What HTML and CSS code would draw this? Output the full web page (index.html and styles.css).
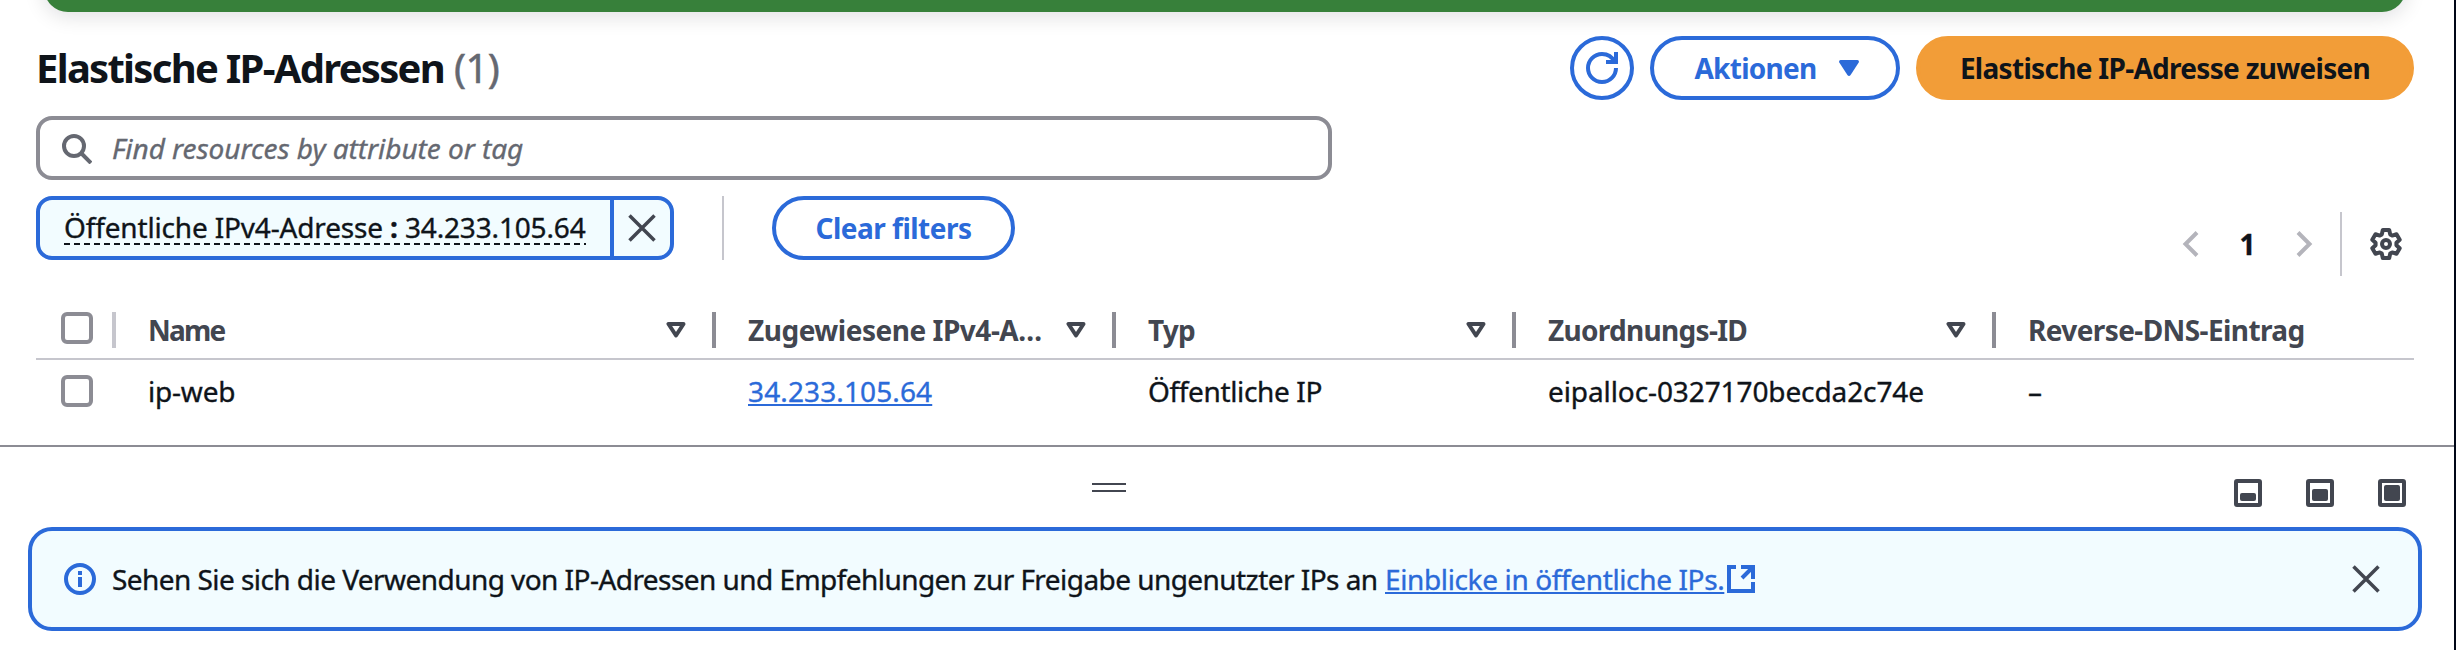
FILE: index.html
```html
<!DOCTYPE html>
<html lang="de">
<head>
<meta charset="utf-8">
<title>Elastische IP-Adressen</title>
<link rel="stylesheet" href="styles.css">
</head>
<body>
<main class="page">
  <div class="flash"></div>

  <header class="header">
    <h1 class="title"><span class="title-text">Elastische IP-Adressen</span><span class="counter">(1)</span></h1>
    <div class="actions">
      <button class="btn btn-icon" aria-label="Aktualisieren">
        <svg class="icon" viewBox="0 0 32 32"><path d="M30 16c0 7.74-6.26 14-14 14S2 23.74 2 16 8.26 2 16 2c5.58 0 10.4 3.26 12.66 8M20 10h10V0"/></svg>
      </button>
      <button class="btn btn-menu"><span class="t-actions">Aktionen</span>
        <svg class="caret" viewBox="0 0 20 16"><path class="solid" d="M1.5 0h17q2 .6 1.2 2.6L11.600 15q-1.600 1.800-3.200 0L.3 2.600Q-.5.6 1.500 0z"/></svg>
      </button>
      <button class="btn btn-primary"><span class="t-primary">Elastische IP-Adresse zuweisen</span></button>
    </div>
  </header>

  <div class="search">
    <svg class="icon" viewBox="0 0 32 32"><circle cx="14" cy="14" r="10"/><path d="M21 21l10 10"/></svg>
    <span class="t-search">Find resources by attribute or tag</span>
  </div>

  <section class="toolbar">
    <div class="filters">
      <div class="token">
        <div class="token-label"><span class="token-text">Öffentliche IPv4-Adresse <b>:</b> 34.233.105.64</span></div>
        <div class="token-close"><svg class="icon" viewBox="0 0 32 32"><path class="cross" d="M3.500 3.500l25 25M28.500 3.500l-25 25"/></svg></div>
      </div>
      <i class="rule"></i>
      <button class="btn btn-clear"><span class="t-clear">Clear filters</span></button>
    </div>
    <div class="pagination">
      <svg class="icon light" viewBox="0 0 32 32"><path d="M22 4.500L10.500 16 22 27.500"/></svg>
      <span class="page-no">1</span>
      <svg class="icon light" viewBox="0 0 32 32"><path d="M10 4.500L21.500 16 10 27.500"/></svg>
      <i class="rule"></i>
      <svg class="icon gear" viewBox="-16 -16 32 32"><path d="M3.200-14L4.200-9.600 6.210-8.440 10.520-9.770 13.720-4.230 10.410-1.160V1.160L13.720 4.230 10.520 9.770 6.210 8.440 4.200 9.600 3.200 14H-3.200L-4.200 9.600-6.210 8.440-10.520 9.770-13.720 4.230-10.410 1.160V-1.160L-13.720-4.230-10.520-9.770-6.210-8.440-4.200-9.600-3.200-14z"/><circle r="4"/></svg>
    </div>
  </section>

  <section class="table">
    <div class="row head">
      <div class="cell select"><i class="checkbox"></i></div>
      <div class="cell"><span class="t-name">Name</span><svg class="sort" viewBox="0 0 20 16"><path d="M2.500 2h15L10 13.500z"/></svg></div>
      <div class="cell"><span class="t-assigned">Zugewiesene IPv4-A…</span><svg class="sort" viewBox="0 0 20 16"><path d="M2.500 2h15L10 13.500z"/></svg></div>
      <div class="cell"><span class="t-type">Typ</span><svg class="sort" viewBox="0 0 20 16"><path d="M2.500 2h15L10 13.500z"/></svg></div>
      <div class="cell"><span class="t-id">Zuordnungs-ID</span><svg class="sort" viewBox="0 0 20 16"><path d="M2.500 2h15L10 13.500z"/></svg></div>
      <div class="cell"><span class="t-dns">Reverse-DNS-Eintrag</span></div>
    </div>
    <div class="row">
      <div class="cell select"><i class="checkbox"></i></div>
      <div class="cell"><span class="v-name">ip-web</span></div>
      <div class="cell"><a class="link v-ip">34.233.105.64</a></div>
      <div class="cell"><span class="v-type">Öffentliche IP</span></div>
      <div class="cell"><span class="v-id">eipalloc-0327170becda2c74e</span></div>
      <div class="cell"><span>–</span></div>
    </div>
  </section>

  <section class="panel">
    <div class="panel-bar">
      <div class="handle"></div>
      <div class="panel-sizes">
        <svg class="size" viewBox="0 0 28 28"><rect x="2" y="2" width="24" height="24" rx="1"/><rect class="solid" x="6" y="14" width="16" height="8" rx="2"/></svg>
        <svg class="size" viewBox="0 0 28 28"><rect x="2" y="2" width="24" height="24" rx="1"/><rect class="solid" x="6" y="10" width="16" height="12" rx="2"/></svg>
        <svg class="size" viewBox="0 0 28 28"><rect x="2" y="2" width="24" height="24" rx="1"/><rect class="solid" x="6" y="6" width="16" height="16" rx="2"/></svg>
      </div>
    </div>
    <div class="alert">
      <svg class="icon info" viewBox="0 0 32 32"><circle cx="16" cy="16" r="14"/><path d="M16 8v4M16 14v10"/></svg>
      <span class="alert-text">Sehen Sie sich die Verwendung von IP-Adressen und Empfehlungen zur Freigabe ungenutzter IPs an</span>
      <a class="link alert-link">Einblicke in öffentliche IPs.</a>
      <svg class="icon external" viewBox="0 0 32 32"><path d="M11 4H4v24h24v-9M16 4h12v12M17 15L28 4"/></svg>
      <svg class="icon dismiss" viewBox="0 0 32 32"><path class="cross" d="M3.500 3.500l25 25M28.500 3.500l-25 25"/></svg>
    </div>
  </section>
</main>
</body>
</html>
```
FILE: styles.css
```css
* { box-sizing: border-box; }
body {
  margin: 0;
  background: #fff;
  color: #0f141a;
  font: 400 28px/40px "Noto Sans", "Open Sans", sans-serif;
  -webkit-text-stroke: .35px currentColor;
}
.page {
  height: 650px;
  overflow: hidden;
  border-right: 2px solid #000716;
}
svg { display: block; flex: none; fill: none; stroke: currentColor; stroke-width: 4; }
.icon { width: 32px; height: 32px; }
.solid { fill: currentColor; stroke: none; }
.cross { stroke-width: 3.5; }

.flash {
  height: 60px;
  margin: -48px 48px 0 44px;
  border-radius: 24px;
  background: #37803a;
  box-shadow: 0 4px 20px 1px rgba(0, 7, 22, .12);
}

.header {
  display: flex;
  align-items: center;
  justify-content: space-between;
  height: 64px;
  margin: 24px 40px 0 36px;
}
.title { display: flex; margin: 0; font-size: 40px; line-height: 48px; font-weight: 700; -webkit-text-stroke-width: 0; }
.title-text { width: 418px; letter-spacing: -1.72px; white-space: nowrap; }
.counter { font-weight: 400; letter-spacing: -.6px; color: #656871; -webkit-text-stroke: .5px currentColor; }
.actions { display: flex; gap: 16px; }

.btn {
  display: flex;
  align-items: center;
  justify-content: center;
  height: 64px;
  padding: 0 0 1px;
  border: 4px solid #2b6ad9;
  border-radius: 32px;
  background: #fff;
  color: #2b6ad9;
  font: 700 28px/40px "Noto Sans", "Open Sans", sans-serif;
  -webkit-text-stroke-width: 0;
}
.btn-icon { width: 64px; padding: 0; }
.btn-menu { width: 250px; gap: 22px; padding-left: 3px; }
.caret { width: 20px; height: 16px; }
.btn-primary { width: 498px; border-color: #f29d38; background: #f29d38; color: #0f141a; }
.btn-clear { width: 243px; }
.t-actions { letter-spacing: -.72px; }
.t-primary { letter-spacing: -.7px; }
.t-clear { letter-spacing: -.5px; }

.search {
  display: flex;
  align-items: center;
  gap: 20px;
  width: 1296px;
  height: 64px;
  margin: 16px 0 0 36px;
  padding-left: 20px;
  border: 4px solid #8c8c94;
  border-radius: 16px;
  color: #656871;
  font-style: italic;
}
.t-search { letter-spacing: -.05px; }

.toolbar {
  display: flex;
  justify-content: space-between;
  height: 80px;
  margin: 16px 52px 0 36px;
}
.filters { display: flex; height: 64px; }
.rule { width: 2px; height: 64px; background: #c6c6cd; }
.token {
  display: flex;
  width: 638px;
  margin-right: 48px;
  border: 4px solid #2b6ad9;
  border-radius: 16px;
  background: #f2fcff;
}
.token-label { display: flex; align-items: center; width: 574px; padding-left: 24px; border-right: 4px solid #2b6ad9; }
.token-text { height: 36px; line-height: 36px; margin-top: -2px; position: relative; letter-spacing: -.16px; white-space: nowrap; }
.token-text::after {
  content: "";
  position: absolute;
  left: 0;
  right: 0;
  bottom: 0;
  height: 2px;
  background: repeating-linear-gradient(90deg, #0f141a 0 6px, transparent 6px 10px);
}
.token-close { display: flex; flex: 1; align-items: center; justify-content: center; color: #424650; }
.filters .rule { margin-right: 48px; }
.pagination { display: flex; align-items: center; height: 64px; margin-top: 16px; }
.light { color: #b4b4bb; }
.page-no { width: 81px; text-align: center; font-weight: 700; }
.pagination .rule { margin: 0 28px 0 20px; }
.gear { color: #424650; stroke-linejoin: round; }

.table { margin: 24px 40px 0 36px; }
.row { display: grid; grid-template-columns: 80px 600px 400px 400px 480px 1fr; height: 62px; }
.head { height: 60px; border-bottom: 2px solid #c6c6cd; color: #424650; font-weight: 700; -webkit-text-stroke-width: 0; }
.cell { display: flex; align-items: center; justify-content: space-between; padding: 0 30px 0 32px; white-space: nowrap; }
.head .cell { height: 60px; }
.select { padding: 0 0 0 25px; }
.head .cell:not(:last-child) {
  background: linear-gradient(#8c8c94, #8c8c94) right 12px / 4px 36px no-repeat;
}
.head .select:not(:last-child) { background-image: linear-gradient(#c6c6cd, #c6c6cd); padding-bottom: 4px; }
.checkbox { width: 32px; height: 32px; border: 4px solid #8c8c94; border-radius: 6px; }
.sort { width: 20px; height: 16px; stroke-linejoin: round; }
.t-name { letter-spacing: -1.8px; }
.t-assigned { letter-spacing: -.48px; }
.t-type { letter-spacing: -.8px; }
.t-id { letter-spacing: -.7px; }
.t-dns { letter-spacing: -.6px; }
.v-name { letter-spacing: -.2px; }
.v-ip { letter-spacing: .12px; }
.v-type { letter-spacing: -.36px; }
.v-id { letter-spacing: -.1px; }
.link { color: #2b6ad9; text-decoration: underline; text-decoration-thickness: 2px; text-underline-offset: 2px; }

.panel { margin-top: 23px; border-top: 2px solid #8c8c94; }
.panel-bar { display: grid; grid-template-columns: 1092px 34px 1fr; height: 80px; padding: 32px 48px 0 0; }
.handle { grid-column: 2; width: 34px; height: 9px; margin-top: 4px; border: solid #424650; border-width: 2px 0; }
.panel-sizes { display: flex; justify-content: flex-end; gap: 44px; color: #424650; }
.size { width: 28px; height: 28px; }
.alert {
  display: flex;
  align-items: center;
  width: 2394px;
  height: 104px;
  margin-left: 28px;
  padding: 0 36px 0 32px;
  border: 4px solid #2b6ad9;
  border-radius: 24px;
  background: #f2fcff;
  white-space: nowrap;
}
.info { color: #2b6ad9; margin-right: 16px; }
.alert-text { width: 1273px; letter-spacing: -.555px; }
.alert-link { letter-spacing: -.37px; }
.external { color: #2b6ad9; margin-left: 1px; }
.dismiss { margin-left: auto; color: #424650; }
```
